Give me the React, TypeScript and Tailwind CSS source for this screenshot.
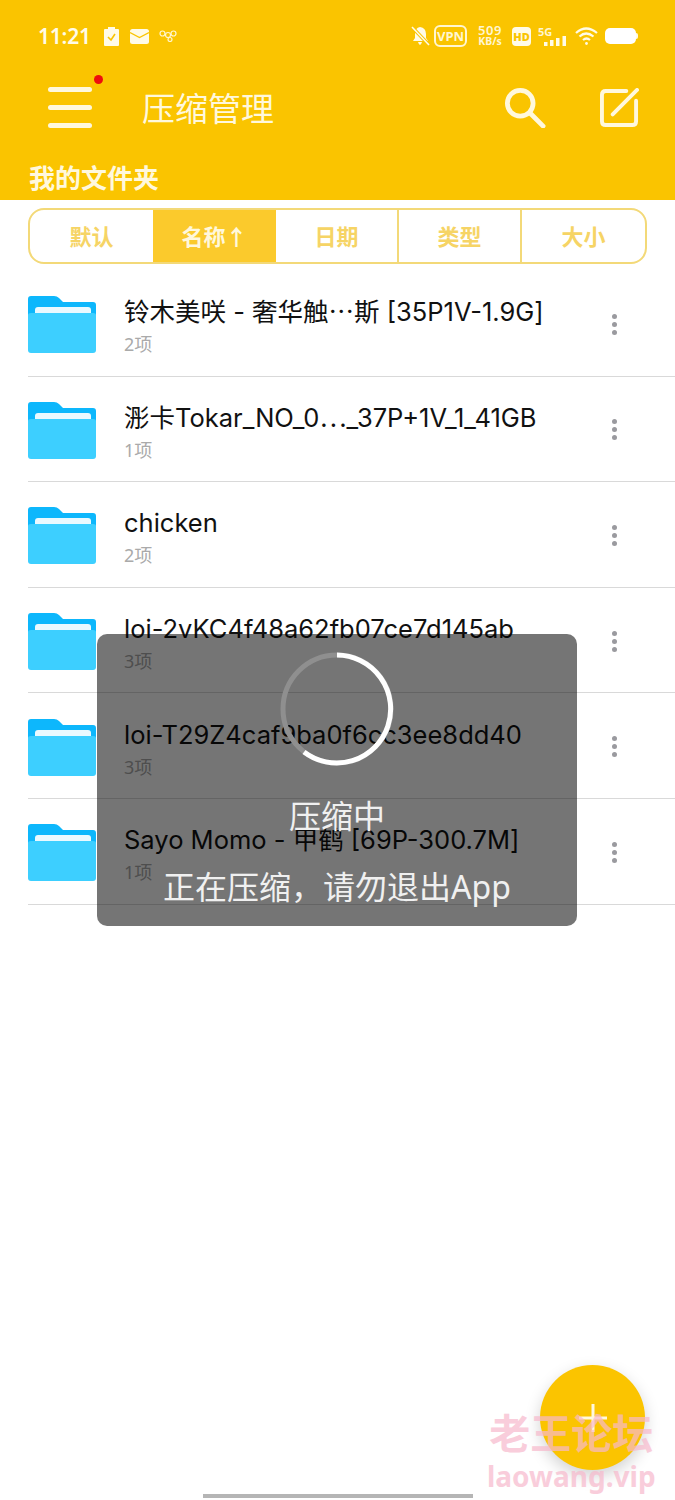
import React from "react";

const font = { fontFamily: '"Noto Sans","Noto Sans CJK SC",sans-serif' };
const rowFont = { fontFamily: 'Inter,"Noto Sans CJK SC",sans-serif' };

const rows = [
  ["铃木美咲 - 奢华触⋯斯 [35P1V-1.9G]", "2项"],
  ["浵卡Tokar_NO_0⋯_37P+1V_1_41GB", "1项"],
  ["chicken", "2项"],
  ["loi-2vKC4f48a62fb07ce7d145ab", "3项"],
  ["loi-T29Z4caf9ba0f6cc3ee8dd40", "3项"],
  ["Sayo Momo - 甲鹤 [69P-300.7M]", "1项"],
];

const tabs = ["默认", "名称↑", "日期", "类型", "大小"];

function Folder() {
  return (
    <svg width="68" height="58" viewBox="0 0 68 58" className="shrink-0 mt-[4px]">
      <path d="M3 0H26Q29 0 31 2L35 6H65Q68 6 68 9V30H0V3Q0 0 3 0Z" fill="#0db7fc" />
      <path d="M0 19Q0 17 3 17H65Q68 17 68 19V54Q68 57 65 57H3Q0 57 0 54Z" fill="#3dcfff" />
      <path d="M7 14Q7 11 10 11H60Q63 11 63 14V17H7Z" fill="#eaf9ff" />
    </svg>
  );
}

function Dots() {
  return (
    <div className="flex flex-col gap-[3px] mr-[58px] mt-[2px]">
      <span className="w-[5px] h-[5px] rounded-full bg-[#9a9a9f]" />
      <span className="w-[5px] h-[5px] rounded-full bg-[#9a9a9f]" />
      <span className="w-[5px] h-[5px] rounded-full bg-[#9a9a9f]" />
    </div>
  );
}

function StatusBar() {
  return (
    <div className="h-[72px] pl-[38px] pr-[37px] flex items-center justify-between text-white">
      <div className="flex items-center">
        <span className="text-[21px] font-semibold leading-none tracking-[-0.2px] text-[#fffbe8]">11:21</span>
        <svg width="15" height="19" viewBox="0 0 15 19" className="ml-[13px]">
          <path d="M4 0H11V2H14Q15 2 15 3V18Q15 19 14 19H1Q0 19 0 18V3Q0 2 1 2H4Z" fill="#fffbe8" />
          <path d="M4 10L7 13L11 7" stroke="#fac400" strokeWidth="1.6" fill="none" />
        </svg>
        <svg width="19" height="15" viewBox="0 0 19 15" className="ml-[11px]">
          <rect width="19" height="15" rx="2.5" fill="#fffbe8" />
          <path d="M0 3.5L9.5 8.5L19 3.5" stroke="#fac400" strokeWidth="1.4" fill="none" />
        </svg>
        <svg width="18" height="12" viewBox="0 0 18 12" className="ml-[10px]" fill="none" stroke="#fff6d0" strokeWidth="1.2">
          <circle cx="3.5" cy="3.5" r="2.5" />
          <circle cx="9" cy="5" r="2.5" />
          <circle cx="14.5" cy="3.5" r="2.5" />
          <circle cx="11" cy="9.5" r="2" />
        </svg>
      </div>
      <div className="flex items-center">
        <svg width="19" height="20" viewBox="0 0 19 20">
          <path d="M9 1Q15 2 15 8V12L17 15H2L4 12V8Q4 2 9 1ZM7 16H11Q10 19 9 19Q8 19 7 16Z" fill="#fffbe8" />
          <path d="M1 1L18 19" stroke="#fac400" strokeWidth="3.4" />
          <path d="M1 1L18 19" stroke="#fffbe8" strokeWidth="1.6" />
        </svg>
        <span className="ml-[4px] w-[33px] h-[22px] border-2 border-[#fff6d0] rounded-[6px] flex items-center justify-center text-[13px] font-bold leading-none text-[#fff6d0]">VPN</span>
        <span className="ml-[9px] w-[28px] flex flex-col items-center font-semibold leading-none text-[#fff6d0]">
          <span className="text-[13px] tracking-[0.5px] leading-[11px]">509</span>
          <span className="text-[10.5px] font-bold leading-[11px]">KB/s</span>
        </span>
        <span className="ml-[8px] w-[19px] h-[19px] rounded-[4px] bg-[#fffbe8] text-[#fac400] flex items-center justify-center text-[11px] font-black leading-none">HD</span>
        <span className="ml-[7px] relative w-[29px] h-[20px]">
          <span className="absolute left-0 top-0 text-[11px] font-bold leading-none text-[#fff6d0]">5G</span>
          <svg width="23" height="10" viewBox="0 0 23 10" className="absolute left-[6px] bottom-0" fill="#fffbe8">
            <rect x="0" y="6" width="3.5" height="4" />
            <rect x="6" y="4" width="3.5" height="6" />
            <rect x="12" y="2" width="3.5" height="8" />
            <rect x="18.5" y="0" width="3.5" height="10" />
          </svg>
        </span>
        <svg width="23" height="20" viewBox="0 0 23 20" className="ml-[8px]" fill="none" stroke="#fffbe8" strokeWidth="2.2">
          <path d="M1 7Q11 -2 22 7" />
          <path d="M4.5 10.5Q11 4.5 18.5 10.5" />
          <path d="M8 14Q11.5 11 15 14" />
          <circle cx="11.5" cy="17.5" r="1.4" fill="#fffbe8" stroke="none" />
        </svg>
        <span className="ml-[7px] flex items-center">
          <span className="w-[31px] h-[16px] rounded-[5px] bg-white" />
          <span className="w-[2px] h-[6px] rounded-r-[2px] bg-[#fffbe8]" />
        </span>
      </div>
    </div>
  );
}

function Header() {
  return (
    <div className="bg-[#fac400]">
      <StatusBar />
      <div className="h-[70px] flex items-center pl-[48px] pr-[36px] text-[#fff8dd]">
        <div className="relative w-[44px] h-[41px] flex flex-col justify-between">
          <span className="h-[5px] rounded-full bg-[#fff8dd]" />
          <span className="h-[5px] rounded-full bg-[#fff8dd]" />
          <span className="h-[5px] rounded-full bg-[#fff8dd]" />
          <span className="absolute left-[46px] top-[-12px] w-[9px] h-[9px] rounded-full bg-[#ee0d0d]" />
        </div>
        <span className="ml-[50px] text-[33px] leading-none mt-[2px]">压缩管理</span>
        <svg width="42" height="41" viewBox="0 0 44 43" className="ml-auto mt-[1px]" fill="none" stroke="#fff8dd" strokeWidth="5">
          <circle cx="17" cy="17" r="13.5" />
          <path d="M27 27L41 41" strokeLinecap="round" />
        </svg>
        <svg width="39" height="39" viewBox="0 0 40 40" className="ml-[54px] mt-[1px]" fill="none" stroke="#fff8dd" strokeWidth="4" strokeLinecap="round">
          <path d="M27 3H6Q2 3 2 7V34Q2 38 6 38H33Q37 38 37 34V13" />
          <path d="M13 27L38 2" />
        </svg>
      </div>
      <div className="h-[58px] pl-[29px] pt-[18px] text-[26px] leading-[36px] font-bold text-[#fff8dd]">我的文件夹</div>
    </div>
  );
}

function Tabs() {
  return (
    <div className="mt-[8px] mx-[28px] h-[56px] grid grid-cols-5 rounded-[16px] border-2 border-[#f3d978] overflow-hidden">
      {tabs.map((t, i) => (
        <div
          key={t}
          className={
            "flex items-center justify-center text-[22px] font-bold " +
            (i === 1 ? "bg-[#fbca2c] text-[#fff8dd]" : "text-[#f6d465] ") +
            (i > 1 && i < 4 ? " border-r-2 border-[#f3d978]" : "")
          }
        >
          {t}
        </div>
      ))}
    </div>
  );
}

function Row({ name, count }: { name: string; count: string }) {
  return (
    <div className="ml-[28px] h-[105.6px] border-b border-[#d9d9d9] flex items-center">
      <Folder />
      <div className="ml-[28px] flex-1 min-w-0 mt-[5px]">
        <div className="text-[25.5px] leading-[36px] text-[#111] whitespace-nowrap" style={rowFont}>{name}</div>
        <div className="text-[18px] leading-[26px] mt-[1px] text-[#aaaaaa]">{count}</div>
      </div>
      <Dots />
    </div>
  );
}

export default function App() {
  return (
    <div className="relative w-[675px] h-[1500px] bg-white overflow-hidden" style={font}>
      <Header />
      <Tabs />
      <div className="mt-[7px]">
        {rows.map((r) => (
          <Row key={r[0]} name={r[0]} count={r[1]} />
        ))}
      </div>

      <div className="absolute left-[97px] top-[634px] w-[480px] h-[292px] rounded-[10px] bg-[rgba(0,0,0,0.54)] flex flex-col items-center">
        <svg width="114" height="114" viewBox="0 0 114 114" className="mt-[18px]" fill="none" strokeWidth="5">
          <circle cx="57" cy="57" r="54" stroke="#8f8f8f" />
          <path d="M57 3A54 54 0 1 1 24 100" stroke="#ffffff" />
        </svg>
        <div className="mt-[30px] text-[32px] leading-[40px] text-[#f0f0f0]">压缩中</div>
        <div className="mt-[31px] text-[32px] leading-[40px] text-[#f0f0f0]">正在压缩，请勿退出App</div>
      </div>

      <div className="absolute left-[540px] top-[1365px] w-[105px] h-[105px] rounded-full bg-[#fbc400] shadow-[0_6px_16px_rgba(0,0,0,0.18)] flex items-center justify-center">
        <svg width="28" height="28" viewBox="0 0 28 28" stroke="#fff8dd" strokeWidth="3">
          <path d="M14 0V28M0 14H28" />
        </svg>
      </div>

      <div className="absolute left-[487px] top-[1408px] flex flex-col items-center font-bold text-[#f7b9cc] opacity-70 leading-none">
        <span className="text-[41px] leading-[50px]">老王论坛</span>
        <span className="text-[28px] leading-[32px] mt-[2px]">laowang.vip</span>
      </div>

      <div className="absolute left-[203px] top-[1494px] w-[270px] h-[4px] bg-[#b5b5b5]" />
    </div>
  );
}
